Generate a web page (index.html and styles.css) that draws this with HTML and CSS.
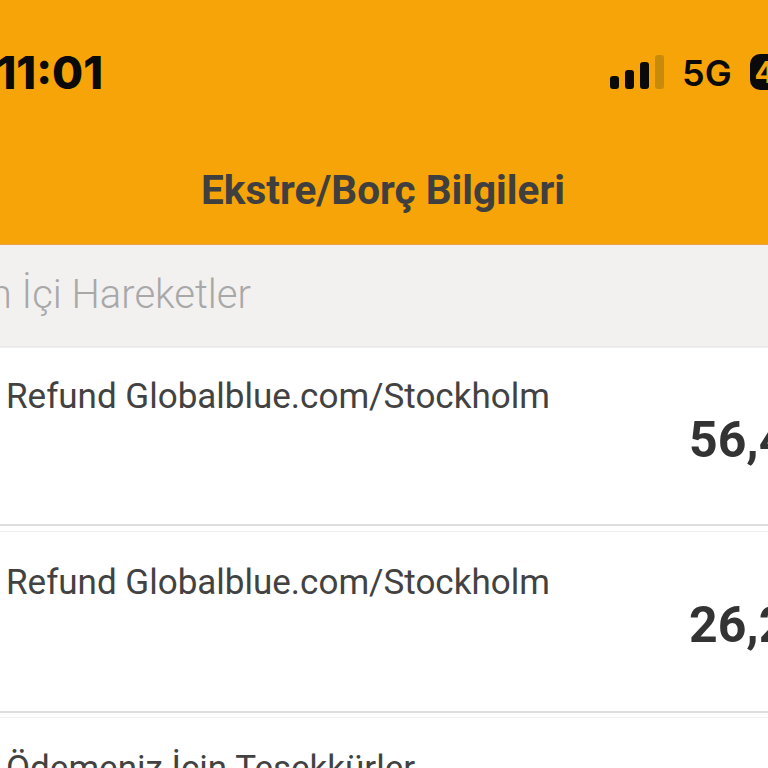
FILE: index.html
```html
<!DOCTYPE html>
<html lang="tr">
<head>
    <meta charset="UTF-8">
    <meta name="viewport" content="width=device-width, initial-scale=1.0">
    <title>Ekstre/Borç Bilgileri</title>
    <link rel="stylesheet" href="styles.css">
</head>
<body>
    <!-- Header -->
    <header class="header">
        <div class="status-bar">
            <span class="time">11:01</span>
            <div class="status-icons">
                <div class="signal">
                    <span class="bar bar-1"></span>
                    <span class="bar bar-2"></span>
                    <span class="bar bar-3"></span>
                    <span class="bar bar-4"></span>
                </div>
                <span class="network">5G</span>
                <span class="battery">46</span>
            </div>
        </div>
        <h1 class="title">Ekstre/Borç Bilgileri</h1>
    </header>

    <!-- Section title -->
    <div class="section-title">Dönem İçi Hareketler</div>

    <!-- Transactions -->
    <div class="row">
        <p class="row-name">Refund Globalblue.com/Stockholm</p>
        <span class="row-amount">56,48 TL</span>
    </div>
    <div class="row">
        <p class="row-name">Refund Globalblue.com/Stockholm</p>
        <span class="row-amount">26,20 TL</span>
    </div>
    <div class="row">
        <p class="row-name">Ödemeniz İçin Teşekkürler</p>
    </div>
</body>
</html>
```

FILE: styles.css
```css
html, body {
    height: 100%;
    overflow: hidden;
}
body {
    margin: 0;
    width: 768px;
    font-family: Roboto, sans-serif;
    background-color: #ffffff;
    color: #3d3d3d;
}
.header {
    height: 245px;
    background-color: #f6a408;
    border-bottom: 1px solid #eba04a;
    box-sizing: border-box;
}
.status-bar {
    height: 148px;
    display: flex;
    align-items: flex-start;
    justify-content: space-between;
    padding-top: 47px;
    box-sizing: border-box;
}
.time {
    width: 103px;
    flex: none;
    display: flex;
    justify-content: flex-end;
    overflow: hidden;
    font-family: Inter, sans-serif;
    font-size: 45px;
    font-weight: 800;
    line-height: 52px;
    color: #0a0a0a;
}
.status-icons {
    display: flex;
    align-items: center;
    width: 158px;
    flex: none;
    height: 52px;
    overflow: hidden;
}
.signal {
    display: flex;
    align-items: flex-end;
    gap: 6px;
    height: 35px;
    margin-top: -3px;
}
.bar {
    width: 9px;
    border-radius: 3px;
    background-color: #0a0a0a;
}
.bar-1 { height: 13px; }
.bar-2 { height: 19px; }
.bar-3 { height: 27px; }
.bar-4 { height: 34px; background-color: #c98a0c; }
.network {
    margin-left: 18px;
    font-family: Inter, sans-serif;
    font-size: 36px;
    font-weight: 600;
    color: #0a0a0a;
}
.battery {
    margin-left: 18px;
    margin-top: -2px;
    width: 70px;
    height: 36px;
    flex: none;
    border-radius: 10px;
    background-color: #0a0a0a;
    color: #f6a408;
    font-family: Inter, sans-serif;
    font-size: 30px;
    font-weight: 700;
    line-height: 36px;
    text-indent: 5px;
}
.title {
    margin: 0;
    padding-right: 2px;
    text-align: center;
    font-size: 40.5px;
    font-weight: 700;
    line-height: 84px;
    color: #3f3f3f;
}
.section-title {
    height: 101px;
    background-color: #f2f1f0;
    border-bottom: 1px solid #e9e9e9;
    font-size: 40px;
    font-weight: 300;
    line-height: 100px;
    color: #a8a8a8;
    text-indent: -115px;
    white-space: nowrap;
}
.row {
    height: 178.5px;
    display: flex;
    border-bottom: 2px solid #dedede;
    margin-bottom: 4px;
    border-top: 1px solid #efefef;
    white-space: nowrap;
}
.section-title + .row {
    height: 176px;
    margin-bottom: 5px;
}
.row-name {
    margin: 0;
    width: 683px;
    flex: none;
    padding-left: 6px;
    box-sizing: border-box;
    font-size: 35px;
    line-height: 40px;
    padding-top: 31px;
    color: #424242;
}
.section-title + .row .row-name {
    padding-top: 29px;
}
.row-amount {
    flex: none;
    padding-left: 6px;
    padding-top: 63px;
    font-size: 50px;
    font-weight: 700;
    line-height: 60px;
    color: #333333;
}
.section-title + .row .row-amount {
    padding-top: 62px;
}
```
